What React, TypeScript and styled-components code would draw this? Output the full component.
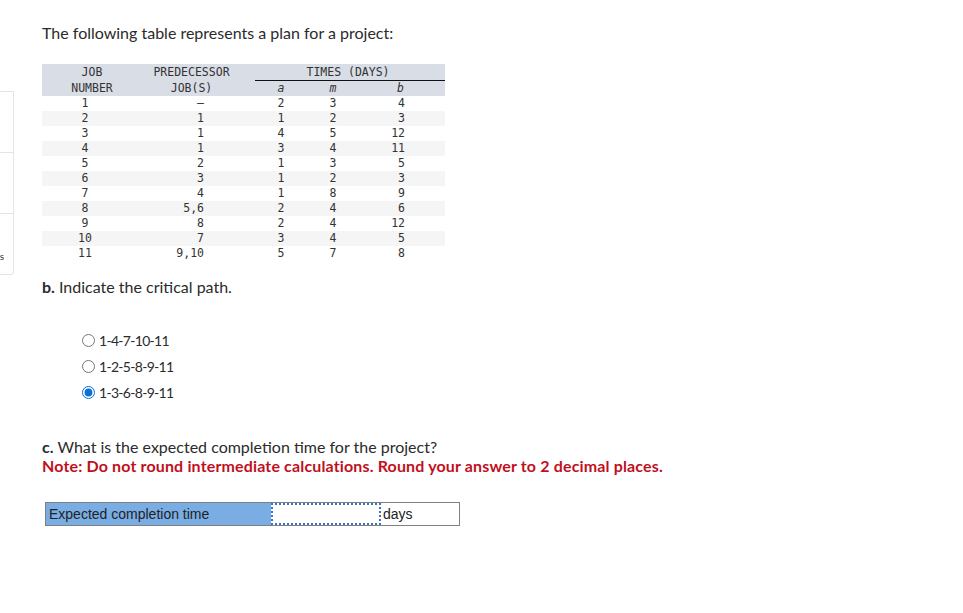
import React from "react";
import styled, { createGlobalStyle } from "styled-components";

const Global = createGlobalStyle`
  html, body { margin: 0; padding: 0; background: #ffffff; }
  body { font-family: Lato, "Open Sans", sans-serif; color: #2b2b2b; }
`;

const Page = styled.div`
  display: flex;
  width: 963px;
  min-height: 613px;
`;

const Sidebar = styled.div`
  width: 13px;
  margin-top: 91px;
  height: 182px;
  border: 1px solid #e4e4e4;
  border-left: none;
  border-bottom-right-radius: 4px;
  overflow: hidden;
  display: flex;
  flex-direction: column;
  flex-shrink: 0;
`;

const SideItem = styled.div<{ $last?: boolean }>`
  flex: 1;
  display: flex;
  align-items: flex-end;
  justify-content: flex-end;
  padding-bottom: 12px;
  border-bottom: ${(p) => (p.$last ? "none" : "1px solid #e4e4e4")};
  font-size: 10px;
  color: #333;
  padding-right: 9px;
`;

const Main = styled.div`
  padding: 23px 0 0 28px;
  display: flex;
  flex-direction: column;
`;

const Prompt = styled.p<{ $mt?: number }>`
  margin: ${(p) => p.$mt ?? 0}px 0 0 0;
  font-size: 16px;
  line-height: 19px;
  color: #2b2b2b;
  white-space: nowrap;
`;

const Note = styled.p`
  margin: 0;
  font-size: 16px;
  line-height: 19px;
  font-weight: 700;
  letter-spacing: 0.15px;
  color: #c0101e;
  white-space: nowrap;
`;

const Table = styled.table`
  margin-top: 22px;
  border-collapse: collapse;
  font-family: "DejaVu Sans Mono", "Liberation Mono", monospace;
  font-size: 11.5px;
  color: #333;
  width: 403px;
  table-layout: fixed;
`;

const Col = styled.col<{ $w: number }>`
  width: ${(p) => p.$w}px;
`;

const HeadRow = styled.tr`
  background: #d9dde6;
`;

const Th = styled.th<{ $align?: string; $pr?: number; $rule?: boolean; $italic?: boolean; $h?: number }>`
  text-align: ${(p) => p.$align ?? "center"};
  padding: 0 ${(p) => p.$pr ?? 0}px 0 0;
  height: ${(p) => p.$h ?? 15}px;
  line-height: 14px;
  font-weight: 400;
  font-style: ${(p) => (p.$italic ? "italic" : "normal")};
  border-bottom: ${(p) => (p.$rule ? "1px solid #111" : "none")};
  vertical-align: middle;
`;

const Row = styled.tr<{ $alt?: boolean }>`
  background: ${(p) => (p.$alt ? "#f5f5f5" : "#ffffff")};
`;

const Td = styled.td<{ $align?: string; $pr?: number }>`
  height: 15px;
  line-height: 15px;
  padding: 0 ${(p) => p.$pr ?? 0}px 0 0;
  text-align: ${(p) => p.$align ?? "center"};
`;

const Options = styled.div`
  margin-top: 36px;
  margin-left: 40px;
  display: flex;
  flex-direction: column;
  gap: 8px;
`;

const Option = styled.label`
  display: flex;
  align-items: center;
  gap: 4px;
  font-size: 14px;
  line-height: 18px;
  letter-spacing: -0.7px;
  color: #2b2b2b;
`;

const Radio = styled.input`
  margin: 0;
  width: 13px;
  height: 13px;
  accent-color: #0b6fd6;
`;

const Answer = styled.div`
  margin-top: 27px;
  margin-left: 3px;
  display: flex;
  width: 413px;
  height: 22px;
  border: 1px solid #808080;
  font-family: "Liberation Sans", Arial, sans-serif;
  font-size: 14px;
  color: #222;
`;

const AnswerLabel = styled.div`
  width: 222px;
  background: #7aade4;
  display: flex;
  align-items: center;
  padding-left: 3px;
`;

const AnswerInput = styled.div`
  width: 110px;
  border: 2px dotted #3b73c4;
  box-sizing: border-box;
  height: 22px;
`;

const AnswerUnit = styled.div`
  flex: 1;
  display: flex;
  align-items: center;
  padding-left: 2px;
`;

const rows = [
  ["1", "\u2014", "2", "3", "4"],
  ["2", "1", "1", "2", "3"],
  ["3", "1", "4", "5", "12"],
  ["4", "1", "3", "4", "11"],
  ["5", "2", "1", "3", "5"],
  ["6", "3", "1", "2", "3"],
  ["7", "4", "1", "8", "9"],
  ["8", "5,6", "2", "4", "6"],
  ["9", "8", "2", "4", "12"],
  ["10", "7", "3", "4", "5"],
  ["11", "9,10", "5", "7", "8"],
];

const options = ["1-4-7-10-11", "1-2-5-8-9-11", "1-3-6-8-9-11"];

export default function App() {
  return (
    <>
      <Global />
      <Page>
        <Sidebar>
          <SideItem />
          <SideItem />
          <SideItem $last>s</SideItem>
        </Sidebar>
        <Main>
          <Prompt>The following table represents a plan for a project:</Prompt>
          <Table>
            <colgroup>
              <Col $w={100} />
              <Col $w={113} />
              <Col $w={52} />
              <Col $w={52} />
              <Col $w={86} />
            </colgroup>
            <thead>
              <HeadRow>
                <Th $h={16}>JOB</Th>
                <Th $h={16} $pr={14}>PREDECESSOR</Th>
                <Th $h={15} colSpan={3} $rule $pr={4}>TIMES (DAYS)</Th>
              </HeadRow>
              <HeadRow>
                <Th>NUMBER</Th>
                <Th $pr={14}>JOB(S)</Th>
                <Th $italic>a</Th>
                <Th $italic>m</Th>
                <Th $align="right" $pr={41} $italic>b</Th>
              </HeadRow>
            </thead>
            <tbody>
              {rows.map((r, i) => (
                <Row key={i} $alt={i % 2 === 1}>
                  <Td $pr={14}>{r[0]}</Td>
                  <Td $align="right" $pr={51}>{r[1]}</Td>
                  <Td>{r[2]}</Td>
                  <Td>{r[3]}</Td>
                  <Td $align="right" $pr={40}>{r[4]}</Td>
                </Row>
              ))}
            </tbody>
          </Table>
          <Prompt $mt={16}>
            <b>b.</b> Indicate the critical path.
          </Prompt>
          <Options>
            {options.map((o, i) => (
              <Option key={o}>
                <Radio type="radio" name="cp" defaultChecked={i === 2} />
                {o}
              </Option>
            ))}
          </Options>
          <Prompt $mt={35}>
            <b>c.</b> What is the expected completion time for the project?
          </Prompt>
          <Note>Note: Do not round intermediate calculations. Round your answer to 2 decimal places.</Note>
          <Answer>
            <AnswerLabel>Expected completion time</AnswerLabel>
            <AnswerInput />
            <AnswerUnit>days</AnswerUnit>
          </Answer>
        </Main>
      </Page>
    </>
  );
}
